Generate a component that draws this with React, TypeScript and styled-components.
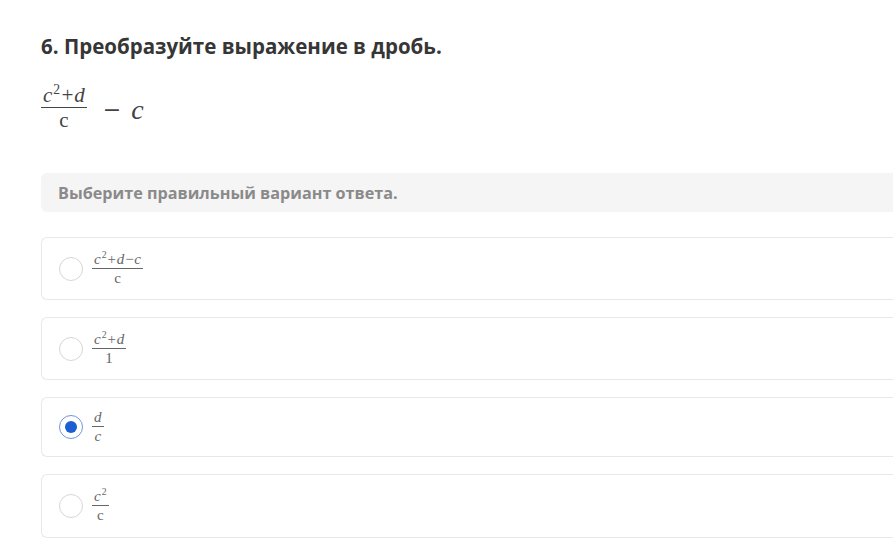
import React, { useState } from 'react';
import styled, { createGlobalStyle } from 'styled-components';

const GlobalStyle = createGlobalStyle`
  html, body {
    margin: 0;
    padding: 0;
    background: #ffffff;
    overflow: hidden;
  }
  body {
    font-family: "Open Sans", "Noto Sans", sans-serif;
  }
`;

// the panel runs off the right edge in the screenshot, so the boxes are flush with it
const Page = styled.div`
  width: 100%;
  padding: 33px 0 0 41px;
  box-sizing: border-box;
`;

const Title = styled.h2`
  margin: 0;
  font-size: 20.5px;
  font-weight: 700;
  line-height: 27px;
  color: #363636;
`;

const Expression = styled.div`
  display: flex;
  align-items: center;
  gap: 10px;
  margin-top: 22px;
  height: 52px;
  font-family: "Liberation Serif", "DejaVu Serif", serif;
  color: #444;
`;

const Frac = styled.span<{ $size: number }>`
  display: inline-flex;
  flex-direction: column;
  align-items: center;
  font-size: ${(p) => p.$size}px;
  line-height: 1;
`;

const Num = styled.span`
  padding: 0 2px 1px;
  border-bottom: 1px solid currentColor;
  font-style: italic;
  white-space: nowrap;
`;

const Den = styled.span<{ $italic?: boolean }>`
  padding-top: 2px;
  font-style: ${(p) => (p.$italic ? 'italic' : 'normal')};
`;

const Sup = styled.sup`
  font-size: 0.65em;
  line-height: 0;
  vertical-align: 0.6em;
  font-style: normal;
  margin-left: 1px;
`;

const Minus = styled.span`
  font-family: "DejaVu Serif", serif;
  font-size: 22px;
  margin-left: 6px;
  margin-top: 2px;
`;

const BigC = styled.span`
  font-size: 28px;
  font-style: italic;
  margin-top: 4px;
`;

const Hint = styled.div`
  margin-top: 39px;
  height: 39px;
  display: flex;
  align-items: center;
  padding-left: 17px;
  background: #f5f5f5;
  border-radius: 6px 0 0 6px;
  font-size: 16.2px;
  font-weight: 700;
  color: #8a8a8a;
`;

const Options = styled.div`
  display: flex;
  flex-direction: column;
  gap: 17px;
  margin-top: 25px;
`;

const Card = styled.label<{ $h: number }>`
  display: flex;
  align-items: center;
  gap: 9px;
  height: ${(p) => p.$h}px;
  box-sizing: border-box;
  padding-left: 17px;
  border: 1.5px solid #e8e8e8;
  border-right: none;
  border-radius: 6px 0 0 6px;
  cursor: pointer;
  color: #666;
`;

const Radio = styled.span<{ $on: boolean }>`
  width: 24px;
  height: 24px;
  box-sizing: border-box;
  border-radius: 50%;
  border: 1.5px solid ${(p) => (p.$on ? '#6f95dc' : '#d6d6d6')};
  display: flex;
  align-items: center;
  justify-content: center;
  flex-shrink: 0;
  &::after {
    content: '';
    width: 12px;
    height: 12px;
    border-radius: 50%;
    background: #1b5fd3;
    display: ${(p) => (p.$on ? 'block' : 'none')};
  }
`;

const OptionMath = styled.span`
  font-family: "Liberation Serif", "DejaVu Serif", serif;
  margin-top: -2px;
`;

type Option = { id: number; h: number; num: React.ReactNode; den: string; denItalic?: boolean };

const options: Option[] = [
  { id: 1, h: 63, num: <>c<Sup>2</Sup>+d−c</>, den: 'c' },
  { id: 2, h: 63, num: <>c<Sup>2</Sup>+d</>, den: '1' },
  { id: 3, h: 60, num: <>d</>, den: 'c', denItalic: true },
  { id: 4, h: 64, num: <>c<Sup>2</Sup></>, den: 'c' },
];

const App: React.FC = () => {
  const [selected, setSelected] = useState(3);

  return (
    <>
      <GlobalStyle />
      <Page>
        <Title>6. Преобразуйте выражение в дробь.</Title>

        <Expression>
          <Frac $size={21}>
            <Num>
              c<Sup>2</Sup>+d
            </Num>
            <Den>c</Den>
          </Frac>
          <Minus>−</Minus>
          <BigC>c</BigC>
        </Expression>

        <Hint>Выберите правильный вариант ответа.</Hint>

        <Options>
          {options.map((o) => (
            <Card key={o.id} $h={o.h} onClick={() => setSelected(o.id)}>
              <Radio $on={selected === o.id} />
              <OptionMath>
                <Frac $size={15}>
                  <Num>{o.num}</Num>
                  <Den $italic={o.denItalic}>{o.den}</Den>
                </Frac>
              </OptionMath>
            </Card>
          ))}
        </Options>
      </Page>
    </>
  );
};

export default App;
